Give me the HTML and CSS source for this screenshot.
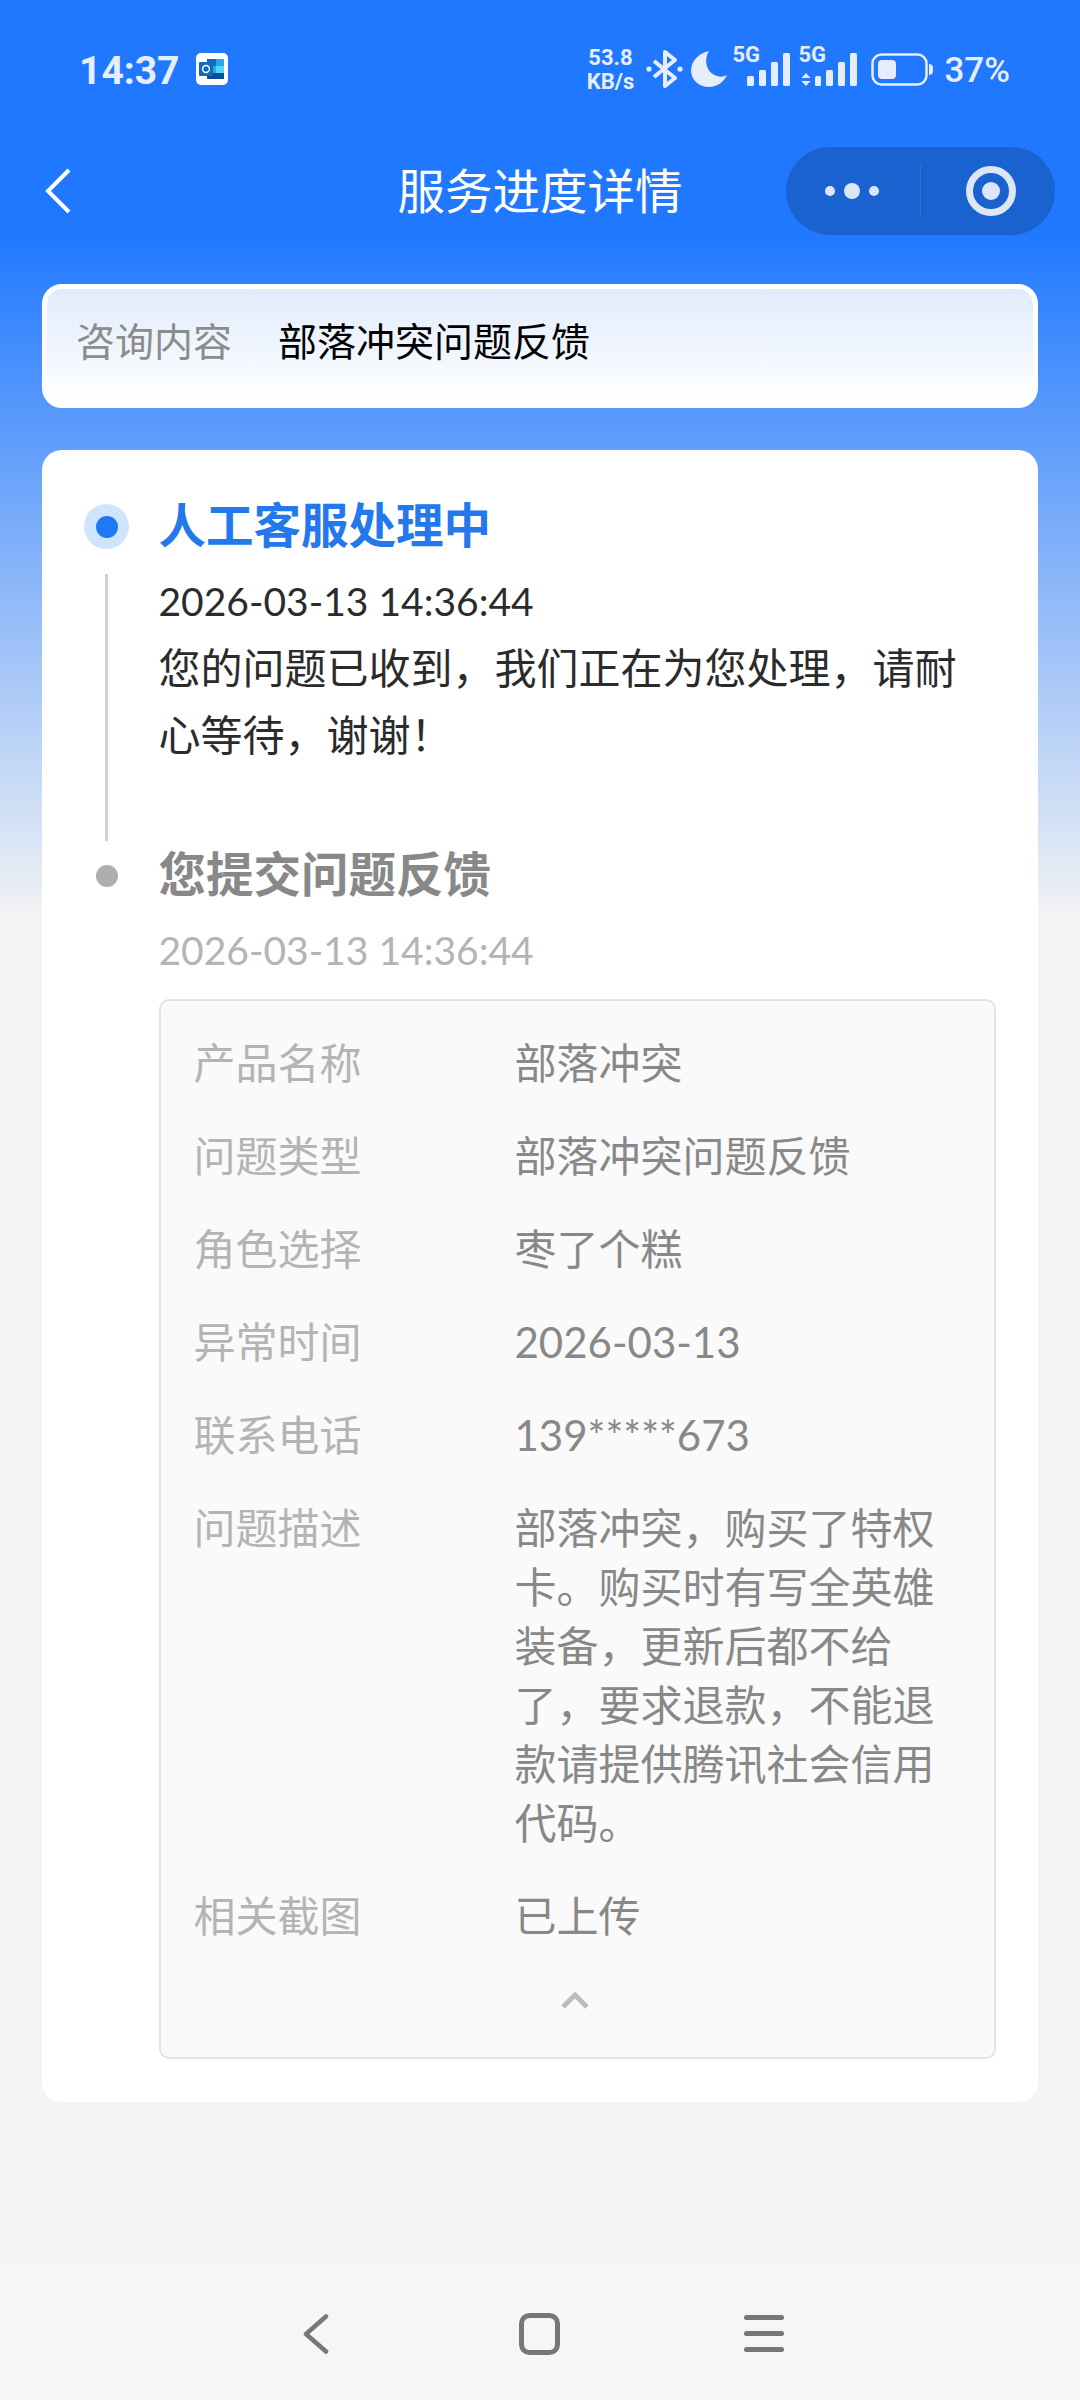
FILE: index.html
```html
<!DOCTYPE html>
<html lang="zh-CN">
<head>
    <meta charset="UTF-8">
    <meta name="viewport" content="width=device-width, initial-scale=1.0">
    <title>服务进度详情</title>
    <link rel="stylesheet" href="styles.css">
</head>
<body>
    <div class="page">
        <div class="status-bar">
            <div class="status-left">
                <span class="clock">14:37</span>
                <svg class="app-icon" width="32" height="32" viewBox="0 0 32 32">
                    <rect width="32" height="32" rx="5" fill="#fff"/>
                    <rect x="11" y="6" width="17" height="20" rx="1" fill="#28a8ea"/>
                    <rect x="11" y="6" width="9" height="7" fill="#0f6cbd"/>
                    <rect x="20" y="13" width="8" height="7" fill="#50d9ff"/>
                    <path d="M11 20h17v5a1 1 0 0 1-1 1H12a1 1 0 0 1-1-1z" fill="#0a4f96"/>
                    <rect x="3" y="9" width="14" height="14" rx="1" fill="#0f6cbd"/>
                    <circle cx="10" cy="16" r="3.4" fill="none" stroke="#fff" stroke-width="1.5"/>
                </svg>
            </div>
            <div class="status-right">
                <div class="speed">
                    <span>53.8</span>
                    <span>KB/s</span>
                </div>
                <svg class="bt-icon" width="37" height="38" viewBox="0 0 37 38">
                    <path d="M8 11l21 17-10 8V2l10 8L8 27" fill="none" stroke="#e6eefc" stroke-width="4" stroke-linejoin="round"/>
                    <circle cx="3" cy="19" r="2.6" fill="#e6eefc"/>
                    <circle cx="34" cy="19" r="2.6" fill="#e6eefc"/>
                </svg>
                <svg class="moon-icon" width="36" height="36" viewBox="0 0 36 36">
                    <path d="M18 0C9 2 1 8 0 19c0 10 8 17 18 17 8 0 15-5 18-12-3 2-7 2-10 1C16 22 12 10 18 0z" fill="#e6eefc"/>
                </svg>
                <div class="signal">
                    <span class="net">5G</span>
                    <svg width="43" height="33" viewBox="0 0 43 33">
                        <rect x="0" y="23" width="7" height="10" rx="1.5"/>
                        <rect x="12" y="17" width="7" height="16" rx="1.5"/>
                        <rect x="24" y="9" width="7" height="24" rx="1.5"/>
                        <rect x="36" y="0" width="7" height="33" rx="1.5"/>
                    </svg>
                </div>
                <div class="signal signal-data">
                    <span class="net">5G</span>
                    <svg width="56" height="33" viewBox="0 0 56 33">
                        <path d="M4 20l4.500 5h-9zM4 33l4.500-5h-9z" transform="translate(1 0)"/>
                        <rect x="14" y="23" width="6" height="10" rx="1.500"/>
                        <rect x="25" y="17" width="7" height="16" rx="1.500"/>
                        <rect x="37" y="9" width="7" height="24" rx="1.500"/>
                        <rect x="49" y="0" width="7" height="33" rx="1.500"/>
                    </svg>
                </div>
                <svg class="battery" width="62" height="33" viewBox="0 0 62 33">
                    <rect x="1.500" y="1.500" width="54" height="30" rx="9" fill="none" stroke="#e6eefc" stroke-width="2.500"/>
                    <rect x="7" y="7" width="18" height="19" rx="4" fill="#e6eefc"/>
                    <path d="M58 11c2.500 0 4 1.500 4 4v3c0 2.500-1.500 4-4 4z" fill="#e6eefc"/>
                </svg>
                <span class="battery-text">37%</span>
            </div>
        </div>

        <header class="nav-bar">
            <svg class="back-icon" width="26" height="46" viewBox="0 0 26 46">
                <path d="M24 2L3 23l21 21" fill="none" stroke="#fff" stroke-width="4"/>
            </svg>
            <div class="nav-title">服务进度详情</div>
            <div class="capsule">
                <div class="capsule-more">
                    <i class="dot-small"></i>
                    <i class="dot-big"></i>
                    <i class="dot-small"></i>
                </div>
                <div class="capsule-close">
                    <i class="ring"></i>
                </div>
            </div>
        </header>

        <main class="content">
            <div class="query-card">
                <span class="query-label">咨询内容</span>
                <span class="query-value">部落冲突问题反馈</span>
            </div>

            <div class="progress-card">
                <div class="step step-active">
                    <div class="marker">
                        <div class="marker-box"><i class="marker-dot"></i></div>
                        <div class="marker-line"></div>
                    </div>
                    <div class="step-body">
                        <div class="step-title">人工客服处理中</div>
                        <div class="step-time">2026-03-13 14:36:44</div>
                        <p class="step-text">您的问题已收到，我们正在为您处理，请耐心等待，谢谢！</p>
                    </div>
                </div>

                <div class="step step-done">
                    <div class="marker">
                        <div class="marker-box"><i class="marker-dot"></i></div>
                    </div>
                    <div class="step-body">
                        <div class="step-title">您提交问题反馈</div>
                        <div class="step-time">2026-03-13 14:36:44</div>
                        <div class="detail-box">
                            <div class="detail-row"><span class="detail-key">产品名称</span><span class="detail-val">部落冲突</span></div>
                            <div class="detail-row"><span class="detail-key">问题类型</span><span class="detail-val">部落冲突问题反馈</span></div>
                            <div class="detail-row"><span class="detail-key">角色选择</span><span class="detail-val">枣了个糕</span></div>
                            <div class="detail-row"><span class="detail-key">异常时间</span><span class="detail-val">2026-03-13</span></div>
                            <div class="detail-row"><span class="detail-key">联系电话</span><span class="detail-val">139*****673</span></div>
                            <div class="detail-row"><span class="detail-key">问题描述</span><span class="detail-val">部落冲突，购买了特权卡。购买时有写全英雄装备，更新后都不给了，要求退款，不能退款请提供腾讯社会信用代码。</span></div>
                            <div class="detail-row"><span class="detail-key">相关截图</span><span class="detail-val">已上传</span></div>
                            <svg class="collapse-icon" width="30" height="18" viewBox="0 0 30 18">
                                <path d="M3 16L15 4l12 12" fill="none" stroke="#bcbcbc" stroke-width="5"/>
                            </svg>
                        </div>
                    </div>
                </div>
            </div>
        </main>

        <footer class="system-nav">
            <svg width="27" height="40" viewBox="0 0 27 40">
                <path d="M24 2.500L4 20l20 17.500" fill="none" stroke="#777" stroke-width="4.500" stroke-linecap="round" stroke-linejoin="round"/>
            </svg>
            <svg width="41" height="42" viewBox="0 0 41 42">
                <rect x="2.500" y="2.500" width="36" height="37" rx="8" fill="none" stroke="#777" stroke-width="5"/>
            </svg>
            <svg width="40" height="37" viewBox="0 0 40 37">
                <rect y="0" width="40" height="5" rx="2.500" fill="#777"/>
                <rect y="16" width="40" height="5" rx="2.500" fill="#777"/>
                <rect y="32" width="40" height="5" rx="2.500" fill="#777"/>
            </svg>
        </footer>
    </div>
</body>
</html>
```

FILE: styles.css
```css
* {
    box-sizing: border-box;
    margin: 0;
    padding: 0;
}
body {
    font-family: Lato, "Noto Sans CJK SC", sans-serif;
    background-color: #f4f4f4;
}
.page {
    width: 1080px;
    height: 2400px;
    display: flex;
    flex-direction: column;
    overflow: hidden;
    background: linear-gradient(180deg, #1f78ff 0, #1f78ff 230px, #e8edf4 887px, #f4f4f4 915px);
}

/* status bar */
.status-bar {
    height: 138px;
    display: flex;
    justify-content: space-between;
    align-items: center;
    padding: 0 70px 0 79px;
    color: #e6eefc;
    font-family: Roboto, sans-serif;
}
.status-left {
    display: flex;
    align-items: center;
    gap: 16px;
}
.clock {
    font-size: 39px;
    font-weight: 700;
    line-height: 32px;
    margin-top: 3px;
}
.status-right {
    display: flex;
    align-items: center;
}
.speed {
    display: flex;
    flex-direction: column;
    align-items: center;
    font-size: 22px;
    font-weight: 700;
    line-height: 24px;
    width: 50px;
    margin-right: 11px;
    margin-top: 1px;
}
.bt-icon {
    margin-right: 8px;
}
.moon-icon {
    margin-right: 5px;
}
.signal {
    position: relative;
    width: 58px;
    height: 33px;
    display: flex;
    justify-content: flex-end;
    align-items: flex-end;
    margin-right: 8px;
    fill: #e6eefc;
}
.signal-data {
    width: 59px;
    margin-right: 14px;
}
.net {
    position: absolute;
    left: 0;
    top: -8px;
    font-size: 22px;
    font-weight: 700;
    line-height: 20px;
}
.battery {
    margin-right: 11px;
}
.battery-text {
    font-size: 35px;
    font-weight: 500;
    line-height: 36px;
    margin-top: 3px;
}

/* title bar */
.nav-bar {
    height: 88px;
    margin-top: 9px;
    display: grid;
    grid-template-columns: minmax(0, 1fr) auto minmax(0, 1fr);
    align-items: center;
    padding: 0 25px;
}
.back-icon {
    margin-left: 20px;
}
.nav-title {
    font-size: 47.500px;
    color: #fff;
    line-height: 60px;
}
.capsule {
    justify-self: end;
    width: 269px;
    height: 88px;
    flex-shrink: 0;
    display: flex;
    border-radius: 44px;
    background-color: #1a62cf;
}
.capsule-more {
    width: 135px;
    display: flex;
    justify-content: center;
    align-items: center;
    gap: 9px;
    padding-right: 4px;
    position: relative;
}
.capsule-more::after {
    content: "";
    position: absolute;
    right: 0;
    top: 18px;
    bottom: 18px;
    width: 1px;
    background-color: #2c70d6;
}
.dot-small {
    width: 10px;
    height: 10px;
    border-radius: 50%;
    background-color: #dde6f7;
}
.dot-big {
    width: 16px;
    height: 16px;
    border-radius: 50%;
    background-color: #dde6f7;
}
.capsule-close {
    flex: 1;
    display: flex;
    justify-content: center;
    align-items: center;
    padding-left: 6px;
}
.ring {
    width: 50px;
    height: 50px;
    border: 7px solid #dde6f7;
    border-radius: 50%;
    display: flex;
    justify-content: center;
    align-items: center;
}
.ring::after {
    content: "";
    width: 18px;
    height: 18px;
    border-radius: 50%;
    background-color: #dde6f7;
}

/* content */
.content {
    flex: 1;
    padding: 49px 42px 0 42px;
}
.query-card {
    height: 124px;
    display: flex;
    align-items: center;
    padding: 0 29px 14px;
    border: 5px solid #fff;
    border-radius: 20px;
    background: linear-gradient(180deg, #e0ecfd, #fff);
    font-size: 39px;
}
.query-label {
    width: 202px;
    color: #8c8c8c;
}
.query-value {
    color: #000;
}
.progress-card {
    margin-top: 42px;
    height: 1652px;
    padding: 42px 42px 0 42px;
    background-color: #fff;
    border-radius: 20px;
}
.step {
    display: flex;
    gap: 29.500px;
}
.step-active {
    padding-bottom: 72px;
}
.marker {
    width: 45px;
    display: flex;
    flex-direction: column;
    align-items: center;
    flex-shrink: 0;
}
.marker-box {
    width: 45px;
    height: 45px;
    margin-top: 12px;
    border-radius: 50%;
    display: flex;
    justify-content: center;
    align-items: center;
}
.marker-dot {
    width: 22px;
    height: 22px;
    border-radius: 50%;
}
.step-active .marker-box {
    background-color: #cfe4fd;
}
.step-active .marker-dot {
    background-color: #1f78f5;
}
.step-done .marker-dot {
    background-color: #aeaeae;
}
.marker-line {
    flex: 1;
    width: 3px;
    margin-top: 25px;
    margin-bottom: -72px;
    background-color: #d2d2d2;
}
.step-body {
    flex: 1;
    min-width: 0;
}
.step-title {
    font-size: 47.500px;
    font-weight: 700;
    line-height: 66px;
}
.step-active .step-title {
    color: #2278ec;
}
.step-done .step-title {
    color: #888;
}
.step-time {
    margin-top: 10px;
    font-size: 39px;
    line-height: 67px;
}
.step-active .step-time {
    color: #2b2b2b;
}
.step-done .step-time {
    color: #b4b4b4;
}
.step-text {
    font-size: 42px;
    line-height: 67px;
    color: #2b2b2b;
}
.detail-box {
    margin-top: 15px;
    height: 1060px;
    padding: 33px 40px 0 33px;
    display: flex;
    flex-direction: column;
    gap: 34px;
    background-color: #fafafa;
    border: 2px solid #e3e3e3;
    border-radius: 10px;
    font-size: 42px;
    line-height: 59px;
}
.detail-row {
    display: flex;
}
.detail-key {
    width: 321px;
    flex-shrink: 0;
    color: #b4b4b4;
}
.detail-val {
    flex: 1;
    color: #888;
}
.collapse-icon {
    align-self: center;
    margin-top: 11px;
    margin-left: 3px;
}

/* system navigation */
.system-nav {
    height: 133px;
    display: flex;
    align-items: center;
    padding-left: 302px;
    gap: 190px;
    background-color: #f6f6f6;
}
.system-nav svg:last-child {
    margin-left: -6px;
}
```
